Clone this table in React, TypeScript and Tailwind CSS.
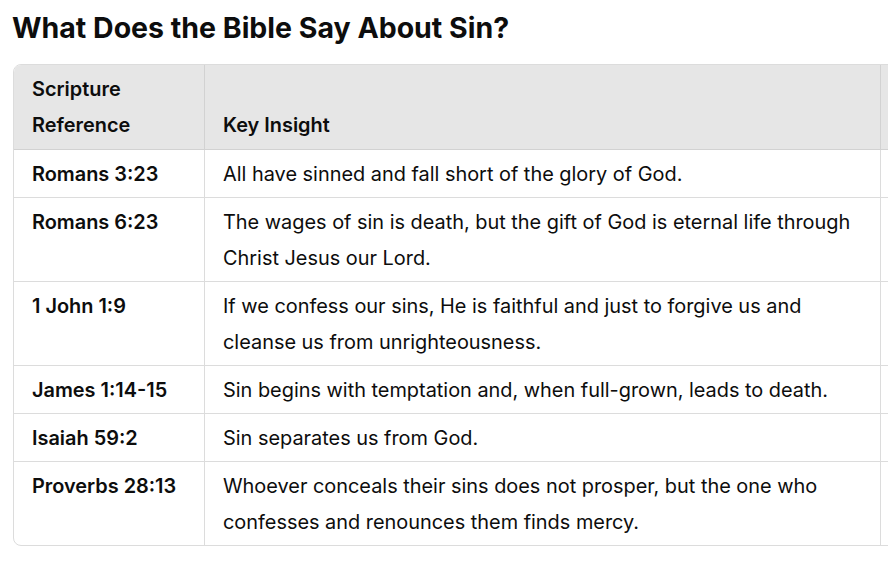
const rows: [string, string][] = [
  ['Romans 3:23', 'All have sinned and fall short of the glory of God.'],
  ['Romans 6:23', 'The wages of sin is death, but the gift of God is eternal life through Christ Jesus our Lord.'],
  ['1 John 1:9', 'If we confess our sins, He is faithful and just to forgive us and cleanse us from unrighteousness.'],
  ['James 1:14-15', 'Sin begins with temptation and, when full-grown, leads to death.'],
  ['Isaiah 59:2', 'Sin separates us from God.'],
  ['Proverbs 28:13', 'Whoever conceals their sins does not prosper, but the one who confesses and renounces them finds mercy.'],
]

export default function App() {
  return (
    <div className="h-[562px] w-[888px] overflow-hidden bg-white text-[#0d0d0d] [font-family:Inter,'Noto_Sans',sans-serif]">
      <h1 className="px-3 pt-[12px] text-[28.5px] font-bold leading-[32px]">What Does the Bible Say About Sin?</h1>
      <div className="ml-[13px] mt-[20px] w-[1000px] overflow-hidden rounded-lg border border-[#dcdcdc]">
        <table className="w-full border-separate border-spacing-0 text-[19.9px] leading-[36px]">
          <thead>
            <tr className="bg-[#e6e6e6]">
              <th className="w-[191px] border-b border-r border-[#d2d2d2] px-[18px] py-[6px] text-left align-bottom font-semibold">Scripture Reference</th>
              <th className="w-[676px] border-b border-r border-[#d2d2d2] px-[18px] py-[6px] text-left align-bottom font-semibold">Key Insight</th>
              <th className="border-b border-[#d2d2d2]"></th>
            </tr>
          </thead>
          <tbody>
            {rows.map(([ref, text], i) => (
              <tr key={ref}>
                <td className={'border-r border-[#dcdcdc] px-[18px] py-[5.5px] align-top font-semibold ' + (i < rows.length - 1 ? 'border-b' : '')}>{ref}</td>
                <td className={'border-r border-[#dcdcdc] px-[18px] py-[5.5px] align-top ' + (i < rows.length - 1 ? 'border-b' : '')}>{text}</td>
                <td className={'border-[#dcdcdc] ' + (i < rows.length - 1 ? 'border-b' : '')}></td>
              </tr>
            ))}
          </tbody>
        </table>
      </div>
    </div>
  )
}
